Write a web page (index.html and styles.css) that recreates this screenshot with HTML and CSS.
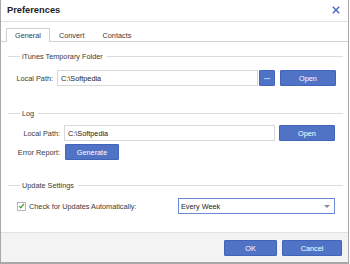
FILE: index.html
```html
<!DOCTYPE html>
<html>
<head>
<meta charset="utf-8">
<link rel="stylesheet" href="styles.css">
</head>
<body>
<div class="win">
  <div class="titlebar">
    <span class="title">Preferences</span>
    <svg class="close" width="8" height="8" viewBox="0 0 8 8"><path d="M0.8 0.8 L7.2 7.2 M7.2 0.8 L0.8 7.2" stroke="#4567c4" stroke-width="1.4" fill="none"/></svg>
  </div>
  <div class="tabs">
    <div class="tab active">General</div>
    <div class="tab">Convert</div>
    <div class="tab">Contacts</div>
  </div>
  <div class="content">
    <div class="group g1">
      <div class="legend"><span>iTunes Temporary Folder</span></div>
      <div class="row r1">
        <span class="lbl lbl1">Local Path:</span>
        <div class="input in1">C:\Softpedia</div>
        <button class="btn dots">···</button>
        <button class="btn open">Open</button>
      </div>
    </div>
    <div class="group g2">
      <div class="legend"><span>Log</span></div>
      <div class="row r2">
        <span class="lbl lbl2">Local Path:</span>
        <div class="input in2">C:\Softpedia</div>
        <button class="btn open">Open</button>
      </div>
      <div class="row r3">
        <span class="lbl lbl2">Error Report:</span>
        <button class="btn gen">Generate</button>
      </div>
    </div>
    <div class="group g3">
      <div class="legend"><span>Update Settings</span></div>
      <div class="row r4">
        <span class="check"><svg width="8" height="8" viewBox="0 0 8 8"><path d="M1.3 4.2 L3.2 6 L6.8 1.6" stroke="#4a9a2c" stroke-width="1.4" fill="none"/></svg></span>
        <span class="chklbl">Check for Updates Automatically:</span>
        <div class="select">Every Week<span class="arrow"></span></div>
      </div>
    </div>
  </div>
  <div class="footer">
    <button class="btn ok">OK</button>
    <button class="btn cancel">Cancel</button>
  </div>
</div>
</body>
</html>
```
FILE: styles.css
```css
* { box-sizing: border-box; }
html, body { margin: 0; padding: 0; background: #fff; }
body {
  width: 350px;
  height: 264px;
  font-family: "Liberation Sans", Arial, sans-serif;
  font-size: 7.3px;
  color: #3a3a3a;
}
.win {
  width: 349px;
  height: 264px;
  border-left: 1px solid #a8a8a8;
  border-right: 1px solid #a8a8a8;
  border-bottom: 2px solid #a8a8a8;
  display: flex;
  flex-direction: column;
  background: #fff;
}
.titlebar {
  height: 22px;
  border-bottom: 1px solid #e2e2e2;
  display: flex;
  align-items: center;
  justify-content: space-between;
  padding: 0 8px 1px 6px;
}
.title {
  font-weight: bold;
  font-size: 9.3px;
  color: #222;
}
.close { display: block; }
.tabs {
  height: 20px;
  border-bottom: 1px solid #d4d4d4;
  display: flex;
  align-items: flex-end;
  padding-left: 5px;
}
.tab {
  height: 14px;
  margin-bottom: -1px;
  padding: 0 8px;
  border: 1px solid transparent;
  border-bottom: none;
  display: flex;
  align-items: center;
}
.tab.active {
  border-color: #cfcfcf;
  background: #fff;
}
.content {
  flex: 1;
  padding: 9px 5px 0 7px;
}
.legend {
  display: flex;
  align-items: center;
  height: 10px;
}
.legend::before {
  content: "";
  width: 12px;
  border-top: 1px solid #dcdcdc;
}
.legend::after {
  content: "";
  flex: 1;
  border-top: 1px solid #dcdcdc;
}
.legend span { padding: 0 4px 0 2px; }
.row {
  display: flex;
  align-items: center;
  height: 16px;
}
.lbl { text-align: right; }
.lbl1 { width: 45px; margin-right: 4px; }
.lbl2 { width: 52px; margin-right: 4px; }
.g1 .row { margin-top: 9px; }
.g2 { margin-top: 22px; }
.g2 .r2 { margin-top: 7px; }
.g2 .r3 { margin-top: 3px; }
.g3 { margin-top: 20px; }
.g3 .row { margin-top: 8px; }
.input {
  height: 16px;
  border: 1px solid #d8d8d8;
  background: #fff;
  display: flex;
  align-items: center;
  padding-left: 3px;
  color: #222;
}
.in1 { width: 201px; }
.in2 { width: 211px; margin-right: 4px; }
.btn {
  font-family: inherit;
  font-size: 7.3px;
  height: 16px;
  background: #5173c6;
  border: 1px solid #4264b8;
  border-radius: 1px;
  color: #fff;
  padding: 0;
  display: flex;
  align-items: center;
  justify-content: center;
}
.dots { width: 16px; margin-left: 1px; font-weight: bold; letter-spacing: -0.5px; }
.open { width: 56px; margin-left: 5px; }
.r2 .open { margin-left: 0; }
.gen { width: 54px; margin-left: 1px; }
.check {
  width: 9px;
  height: 9px;
  border: 1px solid #b5b5b5;
  background: #fff;
  margin-left: 9px;
  display: flex;
  align-items: center;
  justify-content: center;
}
.check svg { display: block; }
.chklbl { margin-left: 3px; width: 149px; }
.select {
  width: 157px;
  height: 16px;
  border: 1px solid #6a8bd4;
  display: flex;
  align-items: center;
  padding-left: 2px;
  color: #222;
  position: relative;
}
.arrow {
  position: absolute;
  right: 4px;
  top: 6px;
  width: 0;
  height: 0;
  border-left: 3px solid transparent;
  border-right: 3px solid transparent;
  border-top: 3px solid #8a8a8a;
}
.footer {
  height: 30px;
  border-top: 1px solid #e0e0e0;
  background: #f3f3f3;
  display: flex;
  justify-content: flex-end;
  padding: 7px 6px 0 0;
  gap: 5px;
}
.ok { width: 53px; }
.cancel { width: 60px; }
```
